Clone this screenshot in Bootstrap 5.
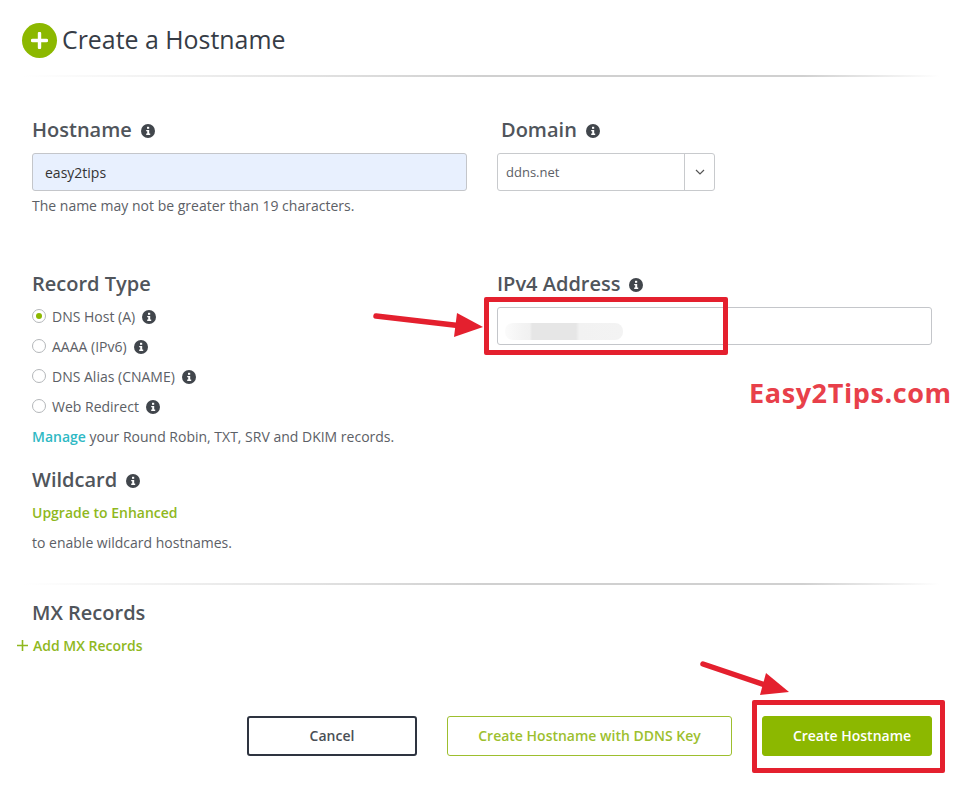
<!DOCTYPE html>
<html lang="en">
<head>
<meta charset="utf-8">
<title>Create a Hostname</title>
<link href="https://cdn.jsdelivr.net/npm/bootstrap@5.3.0/dist/css/bootstrap.min.css" rel="stylesheet">
<style>
body{font-family:"Open Sans","Liberation Sans",sans-serif;background:#fff;color:#54585d;font-size:14px;}
.page{position:relative;width:974px;height:799px;overflow:hidden;padding:23px 32px 0;}
.head-row{margin-left:-10px;height:35px;gap:5px;}
.plus-disc{width:35px;height:35px;border-radius:50%;background:#8cb800;flex:none;}
.page-title{font-size:24.9px;font-weight:500;color:#363c46;margin:0;line-height:33px;padding-bottom:2px;}
.fade-rule{height:2px;background:linear-gradient(90deg,#fff 0,#d0d0d0 50%,#d0d0d0 85%,#fff 100%);margin:0;opacity:1;border:0;}
.rule-a{margin:17px 2px 0 -8px;}
.form-cols{display:grid;grid-template-columns:435px 435px;column-gap:30px;margin-top:39px;}
.lbl{font-size:20px;font-weight:600;color:#50555b;line-height:28px;margin:0;display:flex;align-items:center;gap:9px;}
.tip{width:14px;height:14px;flex:none;margin-top:2px;}
.ctl{height:38px;border:1px solid #c4c6ca;border-radius:3px;font-size:14px;padding:0 12px;color:#333;box-shadow:none;}
.ctl-fill{background:#e8f0fe;}
.help{font-size:14px;line-height:20px;margin:5px 0 0;color:#5c6066;}
.dom-lbl{padding-left:4px;}
.dom-wrap{width:218px;height:38px;border:1px solid #c8cacd;border-radius:3px;display:flex;}
.dom-val{flex:1;font-size:13px;padding:0 8px;line-height:36px;color:#5c6066;}
.dom-btn{width:30px;border-left:1px solid #c8cacd;display:flex;align-items:center;justify-content:center;}
.host-cell{height:138px;}
.field-gap{margin-top:9px;}
.radio-row{display:flex;align-items:center;height:30px;gap:6px;font-size:14px;color:#5c6066;}
.radio-row .tip{margin-left:1px;}
.rdo{width:14px;height:14px;border:1px solid #b4b7ba;border-radius:50%;flex:none;display:flex;align-items:center;justify-content:center;background:#fff;}
.rdo-on i{display:block;width:6px;height:6px;border-radius:50%;background:#8cb800;}
.radio-stack{margin-top:3px;}
.copy{font-size:14px;line-height:20px;margin:0;color:#5c6066;}
.manage-line{margin-top:6px;}
.upgrade-line{margin-top:9px;}
.enable-line{margin-top:10px;}
.teal{color:#2fb9c4;font-weight:600;text-decoration:none;}
.lime{color:#8fb81e;font-weight:600;text-decoration:none;font-size:14px;}
.wild{margin-top:19px;}
.rule-b{margin:30px 2px 0 -8px;}
.mx-title{margin-top:14px;}
.mx-add{display:flex;align-items:center;gap:5px;margin-left:-15px;height:20px;margin-top:8px;}
.act-row{display:flex;justify-content:flex-end;gap:30px;margin-top:61px;margin-right:10px;}
.act{height:40px;font-size:14px;font-weight:600;border-radius:3px;display:flex;align-items:center;justify-content:center;padding:0 0 2px;}
.act-cancel{width:170px;border:2px solid #2e3440;color:#4a4f55;background:#fff;}
.act-ghost{width:285px;border:1px solid #9dbf2e;color:#9dbf2e;background:#fff;}
.act-go{width:170px;border:1px solid #8cb800;background:#8cb800;color:#fff;padding-left:10px;}
.blur-ip{position:absolute;left:505px;top:323px;width:118px;height:17px;border-radius:8px;background:linear-gradient(90deg,#fbfbfb 0,#f3f3f3 15%,#f1f1f1 21%,#e6e6e6 23%,#e6e6e6 60%,#f2f2f2 63%,#f3f3f3 100%);}
.mark-box{position:absolute;border:5px solid #e4202e;border-radius:2px;pointer-events:none;}
.box-ip{left:484px;top:297px;width:244px;height:58px;}
.box-go{left:752px;top:700px;width:193px;height:73px;}
.wm{position:absolute;left:749px;top:375px;font-size:27px;font-weight:700;color:#e8404a;line-height:36px;white-space:nowrap;letter-spacing:.6px;}
.arrows{position:absolute;left:0;top:0;pointer-events:none;}
.sym-defs{position:absolute;}
</style>
</head>
<body>
<div class="page">
  <div class="d-flex align-items-center head-row">
    <div class="plus-disc d-flex align-items-center justify-content-center">
      <svg width="17" height="17" viewBox="0 0 17 17"><path d="M8.5 1.5v14M1.5 8.5h14" stroke="#fff" stroke-width="3.4" stroke-linecap="round"/></svg>
    </div>
    <h1 class="page-title">Create a Hostname</h1>
  </div>
  <hr class="fade-rule rule-a">

  <div class="form-cols">
    <div class="host-cell">
      <p class="lbl">Hostname <svg class="tip" viewBox="0 0 14 14"><use href="#inf"/></svg></p>
      <input class="form-control ctl ctl-fill field-gap" type="text" value="easy2tips" aria-label="Hostname">
      <p class="help">The name may not be greater than 19 characters.</p>
    </div>
    <div class="host-cell">
      <p class="lbl dom-lbl">Domain <svg class="tip" viewBox="0 0 14 14"><use href="#inf"/></svg></p>
      <div class="dom-wrap field-gap">
        <div class="dom-val">ddns.net</div>
        <div class="dom-btn"><svg width="10" height="6" viewBox="0 0 10 6"><path d="M1 1l4 4 4-4" fill="none" stroke="#555" stroke-width="1.2"/></svg></div>
      </div>
    </div>
    <div class="mt-3">
      <p class="lbl">Record Type</p>
      <div class="radio-stack">
        <div class="radio-row"><span class="rdo rdo-on"><i></i></span>DNS Host (A) <svg class="tip" viewBox="0 0 14 14"><use href="#inf"/></svg></div>
        <div class="radio-row"><span class="rdo"></span>AAAA (IPv6) <svg class="tip" viewBox="0 0 14 14"><use href="#inf"/></svg></div>
        <div class="radio-row"><span class="rdo"></span>DNS Alias (CNAME) <svg class="tip" viewBox="0 0 14 14"><use href="#inf"/></svg></div>
        <div class="radio-row"><span class="rdo"></span>Web Redirect <svg class="tip" viewBox="0 0 14 14"><use href="#inf"/></svg></div>
      </div>
      <p class="copy manage-line"><a class="teal" href="#">Manage</a> your Round Robin, TXT, SRV and DKIM records.</p>
      <div class="wild">
        <p class="lbl">Wildcard <svg class="tip" viewBox="0 0 14 14"><use href="#inf"/></svg></p>
        <p class="copy upgrade-line"><a class="lime" href="#">Upgrade to Enhanced</a></p>
        <p class="copy enable-line">to enable wildcard hostnames.</p>
      </div>
    </div>
    <div class="mt-3">
      <p class="lbl">IPv4 Address <svg class="tip" viewBox="0 0 14 14"><use href="#inf"/></svg></p>
      <input class="form-control ctl field-gap" type="text" aria-label="IPv4 Address">
    </div>
  </div>
  <hr class="fade-rule rule-b">
  <p class="lbl mx-title">MX Records</p>
  <a class="lime mx-add" href="#"><svg width="11" height="11" viewBox="0 0 11 11"><path d="M5.5 0v11M0 5.5h11" stroke="#8fb81e" stroke-width="1.6"/></svg>Add MX Records</a>
  <div class="act-row">
    <button class="btn act act-cancel" type="button">Cancel</button>
    <button class="btn act act-ghost" type="button">Create Hostname with DDNS Key</button>
    <button class="btn act act-go" type="button">Create Hostname</button>
  </div>

  <div class="blur-ip"></div>
  <div class="mark-box box-ip"></div>
  <div class="mark-box box-go"></div>
  <div class="wm">Easy2Tips.com</div>
  <svg class="arrows" width="974" height="799" viewBox="0 0 974 799">
    <path d="M376 316L458 325.5" stroke="#e4202e" stroke-width="5.5" stroke-linecap="round"/>
    <path d="M457 313L483 327L454 337Z" fill="#e4202e"/>
    <path d="M703 664L771 687" stroke="#e4202e" stroke-width="5.5" stroke-linecap="round"/>
    <path d="M766 673L789 692L760 695Z" fill="#e4202e"/>
  </svg>
</div>
<svg class="sym-defs" width="0" height="0">
  <symbol id="inf" viewBox="0 0 14 14">
    <circle cx="7" cy="7" r="7" fill="#41464c"/>
    <rect x="6" y="2.8" width="2.2" height="2" fill="#fff"/>
    <path d="M5.2 6h3v3.6h1v1.3H5.2V9.6h1V7.3h-1z" fill="#fff"/>
  </symbol>
</svg>
<script src="https://cdn.jsdelivr.net/npm/bootstrap@5.3.0/dist/js/bootstrap.bundle.min.js"></script>
</body>
</html>
